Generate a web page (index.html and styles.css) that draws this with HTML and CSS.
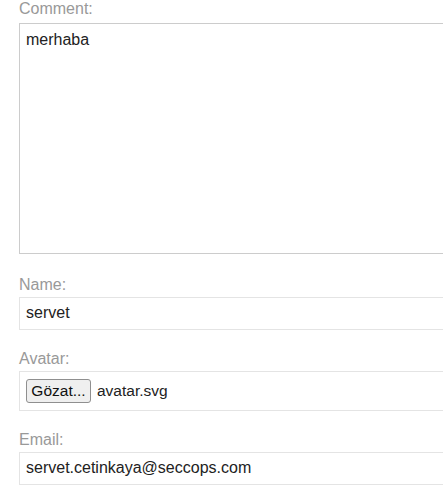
FILE: index.html
```html
<!DOCTYPE html>
<html lang="tr">
<head>
<meta charset="utf-8">
<title>Form</title>
<link rel="stylesheet" href="styles.css">
</head>
<body>
<form class="form">
  <div class="field field-comment">
    <label class="label" for="comment">Comment:</label>
    <textarea class="textarea" id="comment">merhaba</textarea>
  </div>
  <div class="field">
    <label class="label" for="name">Name:</label>
    <input class="input" id="name" type="text" value="servet">
  </div>
  <div class="field">
    <label class="label">Avatar:</label>
    <div class="filebox">
      <button class="filebtn" type="button">Gözat...</button>
      <span class="filename">avatar.svg</span>
    </div>
  </div>
  <div class="field">
    <label class="label" for="email">Email:</label>
    <input class="input" id="email" type="text" value="servet.cetinkaya@seccops.com">
  </div>
</form>
</body>
</html>
```
FILE: styles.css
```css
html, body {
  margin: 0;
  padding: 0;
  overflow: hidden;
  background: #fff;
}
body {
  font-family: Arial, "Liberation Sans", sans-serif;
  font-size: 16px;
  color: #222;
}
.form {
  padding-left: 19px;
  width: 500px;
}
.field {
  margin-bottom: 20px;
}
.field-comment {
  margin-bottom: 22px;
}
.label {
  display: block;
  line-height: 18px;
  height: 18px;
  color: #999;
  margin-bottom: 3px;
}
.field-comment .label {
  margin-bottom: 5px;
}
.textarea {
  display: block;
  box-sizing: border-box;
  width: 100%;
  height: 231px;
  margin: 0;
  border: 1px solid #cccccc;
  padding: 7px 6px;
  font: 16px/18px Arial, "Liberation Sans", sans-serif;
  color: #222;
  resize: none;
  outline: none;
}
.input {
  display: block;
  box-sizing: border-box;
  width: 100%;
  height: 33px;
  margin: 0;
  border: 1px solid #e4e4e4;
  padding: 6px 6px 7px;
  font: 16px/18px Arial, "Liberation Sans", sans-serif;
  color: #222;
  outline: none;
}
.filebox {
  box-sizing: border-box;
  height: 40px;
  border: 1px solid #e4e4e4;
  padding: 7px 6px;
  display: flex;
  align-items: center;
  gap: 6px;
}
.filebtn {
  box-sizing: border-box;
  height: 24px;
  width: 65px;
  margin: 0;
  padding: 0 4px;
  background: #efefef;
  border: 1px solid #8f8f8f;
  border-radius: 3px;
  font: 15.5px/18px Arial, "Liberation Sans", sans-serif;
  color: #111;
}
.filename {
  font-size: 15.5px;
  line-height: 18px;
  color: #222;
}
```
